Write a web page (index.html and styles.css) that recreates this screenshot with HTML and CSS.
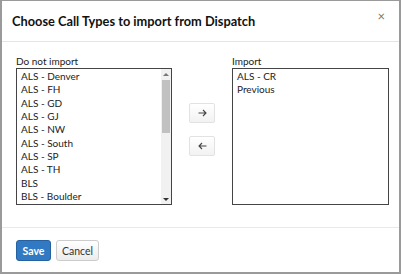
FILE: index.html
```html
<!DOCTYPE html>
<html>
<head>
<meta charset="utf-8">
<link rel="stylesheet" href="styles.css">
</head>
<body>
<div class="modal">
  <div class="modal-header">
    <h1 class="modal-title">Choose Call Types to import from Dispatch</h1>
    <span class="close">×</span>
  </div>
  <div class="modal-body">
    <div class="col">
      <div class="label">Do not import</div>
      <div class="listbox">
        <ul class="items">
          <li>ALS - Denver</li>
          <li>ALS - FH</li>
          <li>ALS - GD</li>
          <li>ALS - GJ</li>
          <li>ALS - NW</li>
          <li>ALS - South</li>
          <li>ALS - SP</li>
          <li>ALS - TH</li>
          <li>BLS</li>
          <li>BLS - Boulder</li>
        </ul>
        <div class="scrollbar">
          <div class="sb-arrow up"></div>
          <div class="sb-track"><div class="sb-thumb"></div></div>
          <div class="sb-arrow down"></div>
        </div>
      </div>
    </div>
    <div class="mid">
      <button class="arrow-btn">
        <svg width="9" height="8" viewBox="0 0 9 8"><path d="M0.5 4H8M5 1L8 4L5 7" fill="none" stroke="#444" stroke-width="1.1"/></svg>
      </button>
      <button class="arrow-btn">
        <svg width="9" height="8" viewBox="0 0 9 8"><path d="M8.5 4H1M4 1L1 4L4 7" fill="none" stroke="#444" stroke-width="1.1"/></svg>
      </button>
    </div>
    <div class="col right">
      <div class="label">Import</div>
      <div class="listbox">
        <ul class="items">
          <li>ALS - CR</li>
          <li>Previous</li>
        </ul>
      </div>
    </div>
  </div>
  <div class="modal-footer">
    <button class="btn primary">Save</button>
    <button class="btn">Cancel</button>
  </div>
</div>
</body>
</html>
```
FILE: styles.css
```css
html, body {
  margin: 0;
  padding: 0;
  background: #fff;
}
body {
  font-family: Lato, "Open Sans", sans-serif;
  color: #222;
}
.modal {
  box-sizing: border-box;
  width: 401px;
  height: 274px;
  border-style: solid;
  border-color: #9a9a9a;
  border-width: 1px 2px 2px 2px;
  display: flex;
  flex-direction: column;
}
.modal-header {
  height: 40px;
  border-bottom: 1px solid #e5e5e5;
  display: flex;
  align-items: center;
  justify-content: space-between;
  padding: 0 14px 0 10px;
}
.modal-title {
  margin: 0;
  font-size: 12.8px;
  font-weight: 700;
  color: #111;
}
.close {
  font-size: 13px;
  color: #777;
  margin-top: -10px;
}
.modal-body {
  display: flex;
  padding: 12px 10px 22px 14px;
  border-bottom: 1px solid #e8e8ee;
}
.col {
  width: 156px;
  display: flex;
  flex-direction: column;
}
.col.right {
  width: 157px;
}
.label {
  font-size: 10px;
  line-height: 14px;
  height: 14px;
  color: #222;
}
.listbox {
  box-sizing: border-box;
  height: 137px;
  border: 1px solid #444;
  display: flex;
}
.items {
  list-style: none;
  margin: 0;
  padding: 1px 0 0 4px;
  flex: 1;
  font-size: 10px;
  line-height: 13.35px;
  color: #222;
}
.scrollbar {
  width: 10px;
  background: #f1f1f1;
  display: flex;
  flex-direction: column;
}
.sb-arrow {
  height: 10px;
  position: relative;
}
.sb-arrow::after {
  content: "";
  position: absolute;
  left: 2px;
  top: 4px;
  border-left: 3px solid transparent;
  border-right: 3px solid transparent;
}
.sb-arrow.up::after {
  border-bottom: 3px solid #777;
}
.sb-arrow.down::after {
  border-top: 3px solid #333;
}
.sb-track {
  flex: 1;
  padding: 1px 1px 0 1px;
}
.sb-thumb {
  height: 53px;
  background: #c1c1c1;
}
.mid {
  width: 60px;
  display: flex;
  flex-direction: column;
  align-items: center;
  padding-top: 49px;
  gap: 13px;
}
.arrow-btn {
  box-sizing: border-box;
  width: 26px;
  height: 20px;
  padding: 0;
  border: 1px solid #e2e2e2;
  border-radius: 2px;
  background: linear-gradient(#fff, #f2f2f2);
  display: flex;
  align-items: center;
  justify-content: center;
}
.modal-footer {
  display: flex;
  gap: 5px;
  padding: 12px 14px 0 14px;
}
.btn {
  box-sizing: border-box;
  height: 21px;
  width: 43px;
  padding: 0;
  font-family: Lato, "Open Sans", sans-serif;
  font-size: 10.5px;
  border-radius: 3px;
  border: 1px solid #ccc;
  background: linear-gradient(#fff, #ececec);
  color: #333;
}
.btn.primary {
  width: 35px;
  background: #3179c2;
  border-color: #25609f;
  color: #fff;
  font-weight: 700;
}
```
